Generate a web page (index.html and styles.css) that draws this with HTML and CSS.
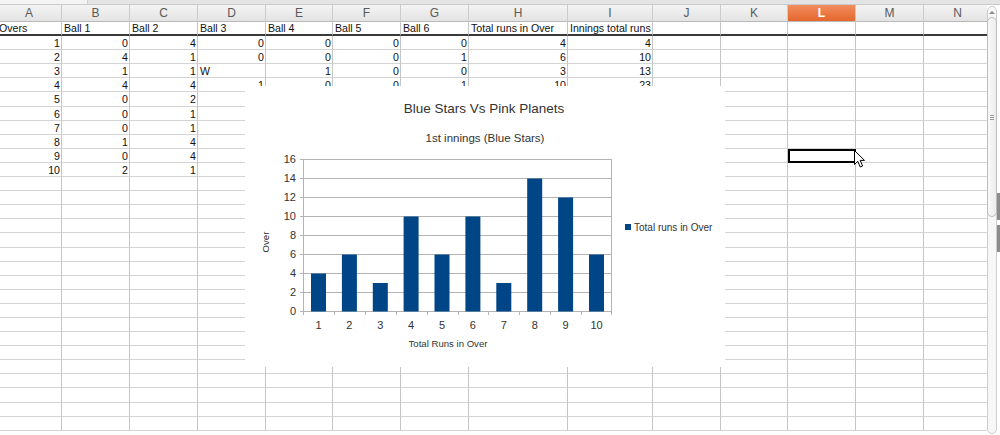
FILE: index.html
```html
<!DOCTYPE html>
<html lang="en">
  <head>
    <meta charset="UTF-8" />
    <meta name="viewport" content="width=device-width, initial-scale=1.0" />
    <title>Blue Stars Vs Pink Planets</title>

    <link rel="stylesheet" href="styles.css">
  </head>

  <body>
    <div class="topbar"><div class="tab-stub"></div></div>

    <div class="workspace">
      <div class="sheet-view">
        <div class="sheet" id="sheet"></div>
      </div>
      <div class="vscroll">
        <div class="track">
          <span class="arrow-up"></span>
          <div class="thumb"><span class="grip"></span></div>
        </div>
        <div class="edge">
          <span class="mark"></span>
          <span class="mark"></span>
        </div>
      </div>
    </div>

    <div class="chart">
      <svg id="chart" width="480" height="281" viewBox="0 0 480 281">
        <text class="chart-title" x="239" y="27">Blue Stars Vs Pink Planets</text>
        <text class="chart-subtitle" x="240" y="56">1st innings (Blue Stars)</text>
        <text class="axis-title" x="203" y="261">Total Runs in Over</text>
        <text class="axis-title" x="21" y="159" transform="rotate(-90 21 156)">Over</text>
        <rect x="380" y="138" width="6" height="6" fill="#004586" />
        <text class="legend-text" x="389" y="144.5">Total runs in Over</text>
      </svg>
    </div>

    <svg class="pointer" width="12" height="19" viewBox="0 0 12 19">
      <path d="M0.5 0.5 L0.5 14.5 L3.8 11.3 L6.2 17 L8.6 16 L6.2 10.4 L10.5 10.4 Z" fill="#fff" stroke="#000" stroke-width="1" />
    </svg>

    <script>
      // columns of the sheet and what is typed in them
      const cols = ["A", "B", "C", "D", "E", "F", "G", "H", "I", "J", "K", "L", "M", "N"];
      const header = ["Overs", "Ball 1", "Ball 2", "Ball 3", "Ball 4", "Ball 5", "Ball 6", "Total runs in Over", "Innings total runs"];
      const rows = [
        [1, 0, 4, 0, 0, 0, 0, 4, 4],
        [2, 4, 1, 0, 0, 0, 1, 6, 10],
        [3, 1, 1, "W", 1, 0, 0, 3, 13],
        [4, 4, 4, 1, 0, 0, 1, 10, 23],
        [5, 0, 2],
        [6, 0, 1],
        [7, 0, 1],
        [8, 1, 4],
        [9, 0, 4],
        [10, 2, 1],
      ];
      const overTotals = [4, 6, 3, 10, 6, 10, 3, 14, 12, 6];
      const rowCount = 29;

      const $sheet = document.getElementById("sheet");

      cols.forEach((c) => {
        const $head = document.createElement("div");
        $head.className = c === "L" ? "col-head active" : "col-head";
        $head.textContent = c;
        $sheet.appendChild($head);
      });

      for (let r = 0; r < rowCount; r++) {
        const data = r === 0 ? header : rows[r - 1] || [];

        cols.forEach((c, i) => {
          const $cell = document.createElement("div");
          $cell.className = "cell";
          if (r === 0) $cell.classList.add("title-row");

          const value = data[i];
          if (value !== undefined) {
            $cell.textContent = value;
            if (typeof value === "number") $cell.classList.add("num");
          }

          // selected cell (L10)
          if (r === 9 && c === "L") $cell.classList.add("selected");
          $sheet.appendChild($cell);
        });
      }

      // chart: plot box 58..367 x 73..225, 2 runs = 19px
      const $chart = document.getElementById("chart");
      const plotLeft = 58;
      const plotTop = 73;
      const plotBottom = 225;
      const plotW = 309;
      const step = plotW / overTotals.length;
      let svg = "";

      for (let v = 0; v <= 16; v += 2) {
        const y = plotBottom - v * 9.5 + 0.5;
        svg += `<line x1="${plotLeft - 3}" y1="${y}" x2="${plotLeft + plotW}" y2="${y}" class="grid" />`;
        svg += `<text class="tick-label" x="51" y="${y + 3.5}" text-anchor="end">${v}</text>`;
      }
      svg += `<line x1="${plotLeft + 0.5}" y1="${plotTop}" x2="${plotLeft + 0.5}" y2="${plotBottom + 1}" class="grid" />`;
      svg += `<line x1="${plotLeft + plotW - 0.5}" y1="${plotTop}" x2="${plotLeft + plotW - 0.5}" y2="${plotBottom + 1}" class="grid" />`;

      overTotals.forEach((total, i) => {
        const x = plotLeft + i * step;
        const h = total * 9.5;
        svg += `<rect x="${(x + step / 2 - 7.5).toFixed(1)}" y="${plotBottom - h + 0.5}" width="15" height="${h}" fill="#004586" />`;
        svg += `<line x1="${Math.round(x) + 0.5}" y1="${plotBottom}" x2="${Math.round(x) + 0.5}" y2="${plotBottom + 4}" class="grid" />`;
        svg += `<text class="tick-label" x="${(x + step / 2).toFixed(1)}" y="243" text-anchor="middle">${i + 1}</text>`;
      });
      svg += `<line x1="${plotLeft + plotW - 0.5}" y1="${plotBottom}" x2="${plotLeft + plotW - 0.5}" y2="${plotBottom + 4}" class="grid" />`;

      $chart.insertAdjacentHTML("beforeend", svg);
    </script>
  </body>
</html>
```

FILE: styles.css
```css
body {
  margin: 0;
  width: 1000px;
  height: 435px;
  overflow: hidden;
  position: relative;
  background-color: #fff;
  font-family: "Liberation Sans", Arial, sans-serif;
}

.topbar {
  display: flex;
  height: 4px;
  background-color: #e4e4e4;
  border-bottom: 1px solid #cacaca;
}

.topbar .tab-stub {
  width: 87px;
  background-color: #f4f4f4;
  border-right: 1px solid #d2d2d2;
}

.workspace {
  display: flex;
  height: 430px;
}

.sheet-view {
  flex: 1;
  overflow: hidden;
}

.sheet {
  display: grid;
  grid-template-columns: 65px 68px 68px 68px 67px 68px 68px 99px 85px 68px 67px 68px 68px 68px;
  grid-template-rows: 17px;
  grid-auto-rows: 14.1px;
  margin-left: -3px;
}

.col-head {
  box-sizing: border-box;
  background: linear-gradient(#f4f4f4, #e3e3e3);
  border-right: 1px solid #cbcbcb;
  border-bottom: 1px solid #b9b9b9;
  color: #5a5a5a;
  font-size: 12px;
  line-height: 16px;
  text-align: center;
}

.col-head.active {
  background: linear-gradient(#f18d5f, #e5672d);
  color: #fff;
  font-weight: bold;
}

.cell {
  box-sizing: border-box;
  border-right: 1px solid #c6c6c6;
  border-bottom: 1px solid #d4d4d4;
  padding: 0 2px;
  color: #111;
  font-size: 10.6px;
  line-height: 14px;
  white-space: nowrap;
  overflow: hidden;
}

.cell.num {
  text-align: right;
  padding-right: 1px;
}

.cell.title-row {
  border-bottom: 2px solid #3a3a3a;
  line-height: 13px;
}

.cell.selected {
  outline: 2px solid #000;
  outline-offset: -2px;
}

.vscroll {
  display: flex;
  width: 13px;
}

.track {
  box-sizing: border-box;
  width: 10px;
  height: 428px;
  margin-top: 1px;
  border: 1px solid #cdcdcd;
  border-radius: 5px;
  background-color: #f7f7f7;
  display: flex;
  flex-direction: column;
  align-items: center;
}

.arrow-up {
  width: 0;
  height: 0;
  margin-top: 4px;
  border-left: 3px solid transparent;
  border-right: 3px solid transparent;
  border-bottom: 3px solid #8a8a8a;
}

.thumb {
  box-sizing: border-box;
  width: 10px;
  height: 200px;
  margin-top: 3px;
  border: 1px solid #bdbdbd;
  border-radius: 5px;
  background: linear-gradient(90deg, #f9f9f9, #ececec);
  display: flex;
  justify-content: center;
  align-items: center;
}

.grip {
  width: 4px;
  height: 1px;
  background-color: #9a9a9a;
  box-shadow: 0 2px 0 #9a9a9a, 0 -2px 0 #9a9a9a;
}

.edge {
  width: 3px;
  display: flex;
  flex-direction: column;
  gap: 5px;
  padding-top: 188px;
}

.edge .mark {
  height: 27px;
  background-color: #8c8c8c;
}

.chart {
  position: absolute;
  left: 245px;
  top: 86px;
  width: 480px;
  height: 281px;
  background-color: #fff;
}

.chart svg {
  display: block;
  font-family: "Liberation Sans", Arial, sans-serif;
}

.chart .grid {
  stroke: #b3b3b3;
  stroke-width: 1;
}

.chart-title {
  font-size: 13.5px;
  fill: #333;
  text-anchor: middle;
}

.chart-subtitle {
  font-size: 11.5px;
  fill: #333;
  text-anchor: middle;
}

.tick-label {
  font-size: 11px;
  fill: #333;
}

.axis-title {
  font-size: 9.6px;
  fill: #333;
  text-anchor: middle;
}

.legend-text {
  font-size: 10px;
  fill: #333;
}

.pointer {
  position: absolute;
  left: 854px;
  top: 150px;
}
```
